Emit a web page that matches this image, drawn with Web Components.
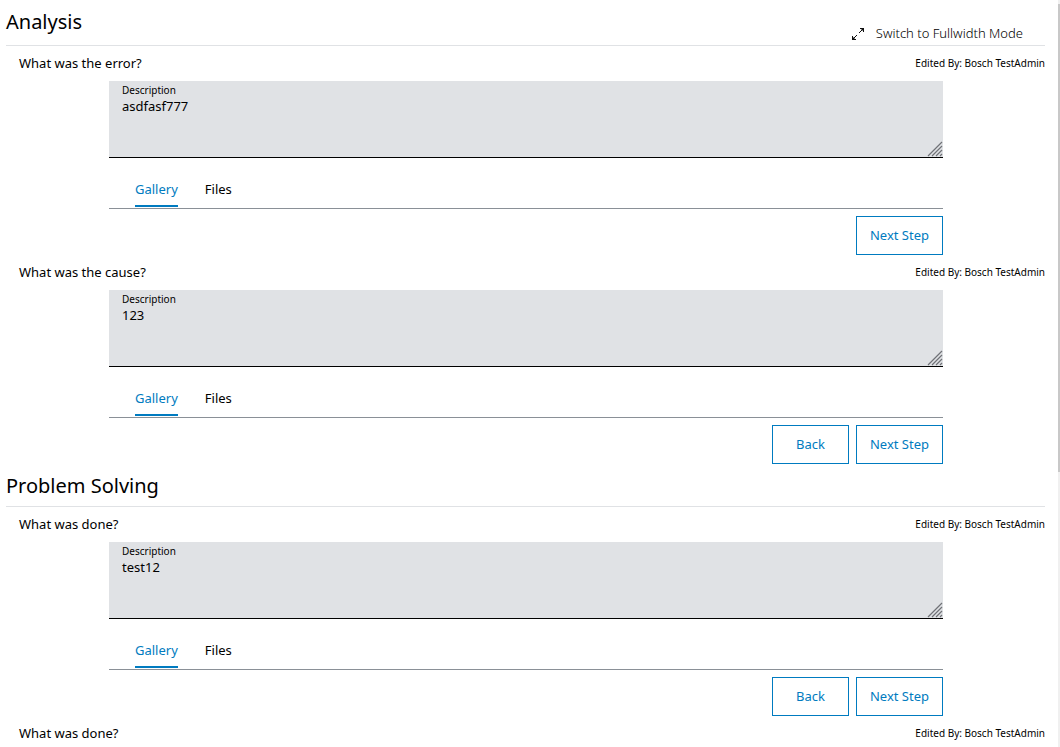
<!DOCTYPE html>
<html lang="en">
<head>
<meta charset="utf-8">
<meta name="viewport" content="width=device-width, initial-scale=1">
<title>Analysis</title>
<style>
  body {
    margin: 0;
    background: #fff;
    color: #000;
    font: 13px/20px "Noto Sans", "Open Sans", sans-serif;
    --accent: #007bc0;
    --field: #e0e2e5;
    --line: #e0e2e5;
    --tab-line: #8a9097;
  }
</style>
</head>
<body>
<analysis-page>
  <step-section heading="Analysis">
    <mode-switch slot="action">Switch to Fullwidth Mode</mode-switch>
    <analysis-step question="What was the error?" editor="Bosch TestAdmin">
      <description-field value="asdfasf777"></description-field>
      <attachment-tabs></attachment-tabs>
      <outline-button slot="actions">Next Step</outline-button>
    </analysis-step>
    <analysis-step question="What was the cause?" editor="Bosch TestAdmin">
      <description-field value="123"></description-field>
      <attachment-tabs></attachment-tabs>
      <outline-button slot="actions">Back</outline-button>
      <outline-button slot="actions">Next Step</outline-button>
    </analysis-step>
  </step-section>
  <step-section heading="Problem Solving">
    <analysis-step question="What was done?" editor="Bosch TestAdmin">
      <description-field value="test12"></description-field>
      <attachment-tabs></attachment-tabs>
      <outline-button slot="actions">Back</outline-button>
      <outline-button slot="actions">Next Step</outline-button>
    </analysis-step>
    <analysis-step question="What was done?" editor="Bosch TestAdmin"></analysis-step>
  </step-section>
</analysis-page>

<script>
/**
 * Creates a template element.
 *
 * @param {string} html - The markup of the template.
 * @returns {HTMLTemplateElement} The template.
 */
function createTemplate (html) {
  const template = document.createElement('template')
  template.innerHTML = html
  return template
}

/**
 * Base class that attaches the shadow root.
 */
class BaseElement extends HTMLElement {
  /**
   * Creates an instance of the current type.
   */
  constructor () {
    super()
    this.attachShadow({ mode: 'open' })
      .appendChild(this.constructor.template.content.cloneNode(true))
  }
}

/*
 * The scrolling page with its thin scroll rail.
 */
customElements.define('analysis-page',
  class extends BaseElement {
    static template = createTemplate(`
      <style>
        :host {
          display: flex;
          height: 100vh;
        }

        main {
          flex: 1;
          min-width: 0;
          padding: 0 13px 0 6px;
          overflow-y: auto;
          scrollbar-width: none;
        }

        .rail {
          display: flex;
          flex-direction: column;
          width: 2px;
          padding-top: 4px;
          background: #f0f0f0;
        }

        .thumb {
          height: 63%;
          background: #c8c8c8;
        }
      </style>
      <main><slot></slot></main>
      <div class="rail" aria-hidden="true"><div class="thumb"></div></div>
    `)
  }
)

/*
 * A section with a heading, an optional action and its steps.
 */
customElements.define('step-section',
  class extends BaseElement {
    static template = createTemplate(`
      <style>
        :host {
          display: block;
        }

        header {
          display: flex;
          justify-content: space-between;
          align-items: flex-start;
          border-bottom: 1px solid var(--line);
        }

        h2 {
          margin: 0;
          padding-top: 2px;
          font-size: 20px;
          font-weight: 400;
          line-height: 40px;
        }
      </style>
      <header>
        <h2></h2>
        <slot name="action"></slot>
      </header>
      <slot></slot>
    `)

    /**
     * Called after the element is inserted into the DOM.
     */
    connectedCallback () {
      this.shadowRoot.querySelector('h2').textContent = this.getAttribute('heading')
    }
  }
)

/*
 * Button that switches to the full width mode.
 */
customElements.define('mode-switch',
  class extends BaseElement {
    static template = createTemplate(`
      <style>
        :host {
          display: block;
          padding: 21px 22px 0 0;
        }

        button {
          display: flex;
          align-items: center;
          gap: 10px;
          padding: 0;
          border: 0;
          background: none;
          color: #000;
          font: inherit;
          font-weight: 300;
          line-height: 24px;
          cursor: pointer;
        }

        svg {
          margin-top: 2px;
        }
      </style>
      <button type="button">
        <svg width="16" height="16" viewBox="0 0 16 16" fill="none" stroke="#111" aria-hidden="true">
          <path d="M9 7l4-4M3 13l4-4"/>
          <path d="M10 2h4v4zM2 10v4h4z" fill="#111" stroke="none"/>
          <path d="M10 2.500h3.500v3.500M2.500 10v3.500h3.500"/>
        </svg>
        <span><slot></slot></span>
      </button>
    `)
  }
)

/*
 * One step: the question, its editor, the content and the buttons.
 */
customElements.define('analysis-step',
  class extends BaseElement {
    static template = createTemplate(`
      <style>
        :host {
          display: block;
        }

        header {
          display: flex;
          justify-content: space-between;
          padding-left: 13px;
          line-height: 35px;
        }

        h3 {
          margin: 0;
          font-size: 13px;
          font-weight: 400;
        }

        .editor {
          font-size: 10px;
        }

        .content {
          padding: 0 102px 0 103px;
        }

        .actions {
          display: flex;
          justify-content: flex-end;
          gap: 7px;
          padding-top: 7px;
        }
      </style>
      <header>
        <h3></h3>
        <span class="editor"></span>
      </header>
      <div class="content">
        <slot></slot>
        <div class="actions"><slot name="actions"></slot></div>
      </div>
    `)

    /**
     * Called after the element is inserted into the DOM.
     */
    connectedCallback () {
      this.shadowRoot.querySelector('h3').textContent = this.getAttribute('question')
      this.shadowRoot.querySelector('.editor').textContent = `Edited By: ${this.getAttribute('editor')}`
    }
  }
)

/*
 * Text area with its label inside the box.
 */
customElements.define('description-field',
  class extends BaseElement {
    static template = createTemplate(`
      <style>
        :host {
          display: block;
          position: relative;
          background: var(--field);
          border-bottom: 1px solid #000;
        }

        label {
          display: block;
          padding: 2px 13px 0;
          font-size: 10px;
          line-height: 14px;
        }

        textarea {
          display: block;
          box-sizing: border-box;
          width: 100%;
          height: 60px;
          padding: 0 13px;
          border: 0;
          outline: 0;
          background: none;
          color: inherit;
          font: inherit;
          line-height: 18px;
          resize: none;
        }

        svg {
          position: absolute;
          right: 0;
          bottom: 0;
        }
      </style>
      <label for="description">Description</label>
      <textarea id="description"></textarea>
      <svg width="16" height="16" viewBox="0 0 16 16" stroke="#707277" stroke-width="1.200" aria-hidden="true">
        <path d="M1 15L15 1M5 15L15 5M9 15L15 9M13 15L15 13"/>
      </svg>
    `)

    /**
     * Called after the element is inserted into the DOM.
     */
    connectedCallback () {
      this.shadowRoot.querySelector('textarea').value = this.getAttribute('value')
    }
  }
)

/*
 * The tabs for the gallery and the files.
 */
customElements.define('attachment-tabs',
  class extends BaseElement {
    static template = createTemplate(`
      <style>
        :host {
          display: flex;
          gap: 27px;
          padding: 16px 26px 1px;
          border-bottom: 1px solid var(--tab-line);
        }

        button {
          padding: 0 0 1px;
          border: 0;
          border-bottom: 2px solid transparent;
          background: none;
          color: inherit;
          font: inherit;
          line-height: 30px;
          cursor: pointer;
        }

        button[aria-selected="true"] {
          color: var(--accent);
          border-color: var(--accent);
        }
      </style>
      <button type="button" role="tab" aria-selected="true">Gallery</button>
      <button type="button" role="tab" aria-selected="false">Files</button>
    `)

    /**
     * Called after the element is inserted into the DOM.
     */
    connectedCallback () {
      this.setAttribute('role', 'tablist')
      const tabs = this.shadowRoot.querySelectorAll('button')

      this.shadowRoot.addEventListener('click', (event) => {
        const selected = event.target.closest('button')
        if (selected) {
          tabs.forEach((tab) => tab.setAttribute('aria-selected', tab === selected))
        }
      })
    }
  }
)

/*
 * Outlined button.
 */
customElements.define('outline-button',
  class extends BaseElement {
    static template = createTemplate(`
      <style>
        :host {
          display: block;
        }

        button {
          display: block;
          min-width: 77px;
          padding: 0 13px;
          border: 1px solid var(--accent);
          background: #fff;
          color: var(--accent);
          font: inherit;
          line-height: 37px;
          cursor: pointer;
        }
      </style>
      <button type="button"><slot></slot></button>
    `)
  }
)
</script>
</body>
</html>
